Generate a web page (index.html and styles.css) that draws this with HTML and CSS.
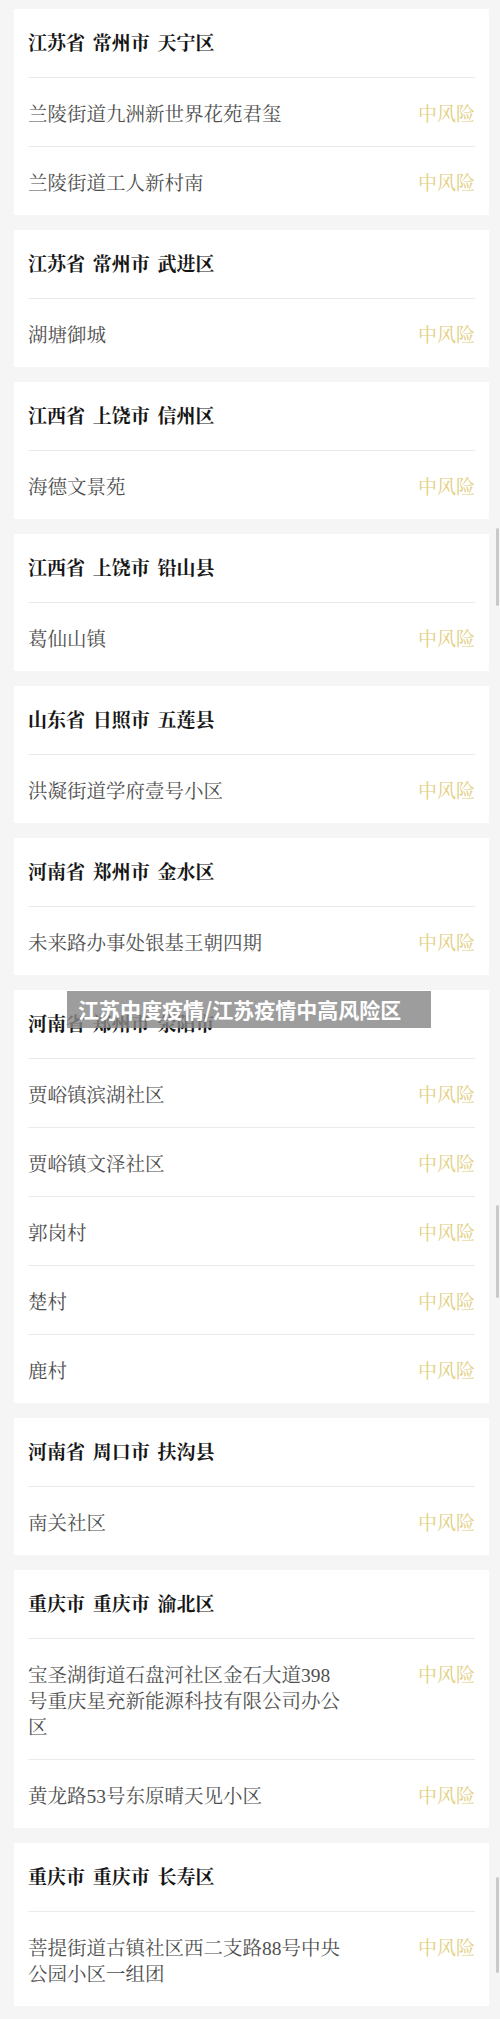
FILE: index.html
```html
<!DOCTYPE html>
<html lang="zh-CN">
<head>
    <meta charset="UTF-8">
    <meta name="viewport" content="width=device-width, initial-scale=1.0">
    <title>江苏中度疫情/江苏疫情中高风险区</title>
    <link rel="stylesheet" href="styles.css">
</head>
<body>
    <div class="page">
        <div class="area-list">
            <div class="area-card">
                <div class="area-title">江苏省 常州市 天宁区</div>
                <div class="area-row"><span class="area-name">兰陵街道九洲新世界花苑君玺</span><span class="risk">中风险</span></div>
                <div class="area-row"><span class="area-name">兰陵街道工人新村南</span><span class="risk">中风险</span></div>
            </div>

            <div class="area-card">
                <div class="area-title">江苏省 常州市 武进区</div>
                <div class="area-row"><span class="area-name">湖塘御城</span><span class="risk">中风险</span></div>
            </div>

            <div class="area-card">
                <div class="area-title">江西省 上饶市 信州区</div>
                <div class="area-row"><span class="area-name">海德文景苑</span><span class="risk">中风险</span></div>
            </div>

            <div class="area-card">
                <div class="area-title">江西省 上饶市 铅山县</div>
                <div class="area-row"><span class="area-name">葛仙山镇</span><span class="risk">中风险</span></div>
            </div>

            <div class="area-card">
                <div class="area-title">山东省 日照市 五莲县</div>
                <div class="area-row"><span class="area-name">洪凝街道学府壹号小区</span><span class="risk">中风险</span></div>
            </div>

            <div class="area-card">
                <div class="area-title">河南省 郑州市 金水区</div>
                <div class="area-row"><span class="area-name">未来路办事处银基王朝四期</span><span class="risk">中风险</span></div>
            </div>

            <div class="area-card">
                <div class="area-title">河南省 郑州市 荥阳市</div>
                <div class="area-row"><span class="area-name">贾峪镇滨湖社区</span><span class="risk">中风险</span></div>
                <div class="area-row"><span class="area-name">贾峪镇文泽社区</span><span class="risk">中风险</span></div>
                <div class="area-row"><span class="area-name">郭岗村</span><span class="risk">中风险</span></div>
                <div class="area-row"><span class="area-name">楚村</span><span class="risk">中风险</span></div>
                <div class="area-row"><span class="area-name">鹿村</span><span class="risk">中风险</span></div>
            </div>

            <div class="area-card">
                <div class="area-title">河南省 周口市 扶沟县</div>
                <div class="area-row"><span class="area-name">南关社区</span><span class="risk">中风险</span></div>
            </div>

            <div class="area-card">
                <div class="area-title">重庆市 重庆市 渝北区</div>
                <div class="area-row"><span class="area-name">宝圣湖街道石盘河社区金石大道398号重庆星充新能源科技有限公司办公区</span><span class="risk">中风险</span></div>
                <div class="area-row"><span class="area-name">黄龙路53号东原晴天见小区</span><span class="risk">中风险</span></div>
            </div>

            <div class="area-card">
                <div class="area-title">重庆市 重庆市 长寿区</div>
                <div class="area-row"><span class="area-name">菩提街道古镇社区西二支路88号中央公园小区一组团</span><span class="risk">中风险</span></div>
            </div>
        </div>

        <!-- caption stamped over the screenshot -->
        <div class="caption">江苏中度疫情/江苏疫情中高风险区</div>

        <!-- scrollbar traces left in the stitched screenshot -->
        <div class="scroll-mark mark-top"></div>
        <div class="scroll-mark mark-mid"></div>
        <div class="scroll-mark mark-end"></div>
    </div>
</body>
</html>
```

FILE: styles.css
```css
body {
    margin: 0;
    padding: 0;
    background-color: #f5f5f5;
    font-family: "Liberation Serif", "Noto Serif CJK SC", "Noto Sans CJK SC", serif;
}

.page {
    position: relative;
    padding: 9px 11px 16px 14px;
}

.area-list {
    display: flex;
    flex-direction: column;
    gap: 15px;
}

.area-card {
    background-color: #fff;
    padding: 0 14px;
}

.area-title {
    padding: 22px 0 20px;
    line-height: 26px;
    font-size: 19px;
    font-weight: bold;
    color: #161616;
    word-spacing: 3px;
    border-bottom: 1px solid #ebebeb;
}

.area-row {
    display: flex;
    align-items: flex-start;
    justify-content: space-between;
    padding: 24px 0 18px;
    border-bottom: 1px solid #ebebeb;
}

.area-row:last-child {
    border-bottom: none;
}

.area-name {
    max-width: 316px;
    line-height: 26px;
    font-size: 19.5px;
    color: #4f4f4f;
}

.risk {
    flex-shrink: 0;
    line-height: 26px;
    font-size: 19px;
    color: #e2cf7f;
}

.caption {
    position: absolute;
    top: 991px;
    left: 67px;
    width: 353px;
    height: 37px;
    padding-left: 11px;
    background-color: rgba(135, 135, 135, 0.82);
    color: #fff;
    font-family: "Noto Sans CJK SC", sans-serif;
    font-size: 21px;
    font-weight: bold;
    line-height: 37px;
    white-space: nowrap;
}

.scroll-mark {
    position: absolute;
    right: 1px;
    width: 3px;
    border-radius: 2px;
    background-color: #c9c9c9;
}

.mark-top {
    top: 528px;
    height: 78px;
}

.mark-mid {
    top: 1205px;
    height: 93px;
}

.mark-end {
    top: 1877px;
    height: 96px;
}
```
